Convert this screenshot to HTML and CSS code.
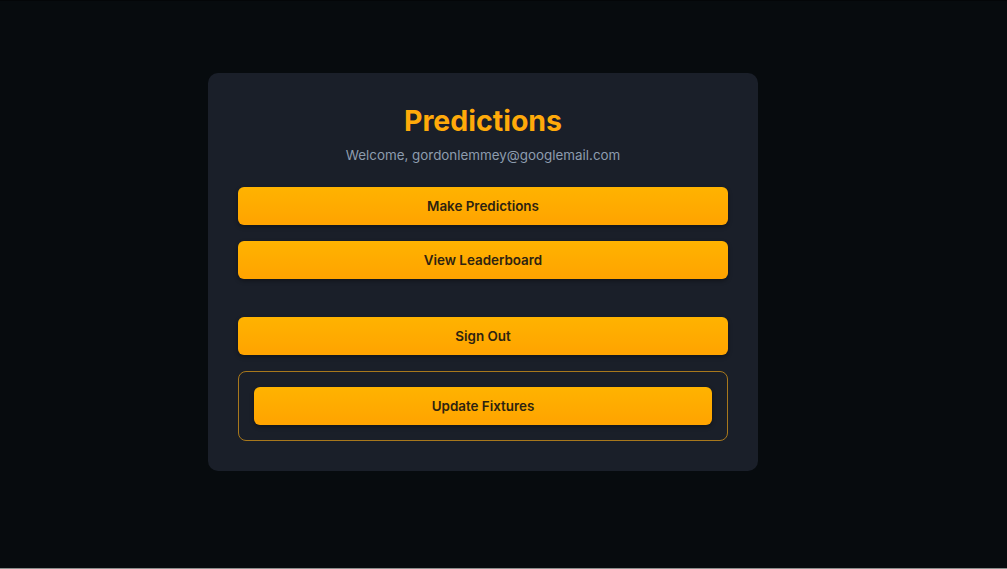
FILE: index.html
```html
<!DOCTYPE html>
<html lang="en">
<head>
<meta charset="utf-8">
<title>Predictions</title>
<link rel="stylesheet" href="styles.css">
</head>
<body>
<main class="page">
  <section class="card">
    <h1 class="title">Predictions</h1>
    <p class="welcome">Welcome, gordonlemmey@googlemail.com</p>
    <div class="actions">
      <button class="btn">Make Predictions</button>
      <button class="btn">View Leaderboard</button>
    </div>
    <button class="btn signout">Sign Out</button>
    <div class="admin">
      <button class="btn">Update Fixtures</button>
    </div>
  </section>
</main>
</body>
</html>
```

FILE: styles.css
```css
html {
  background: #8a8f8c;
}
body {
  margin: 0;
  min-height: 568px;
  background: #070b0e;
  font-family: Inter, "Noto Sans", sans-serif;
  border-top: 1px solid #040608;
  box-sizing: border-box;
}
.page {
  padding-top: 72px;
  padding-left: 208px;
}
.card {
  width: 550px;
  box-sizing: border-box;
  background: #1a1f29;
  border-radius: 10px;
  padding: 30px 30px 30px;
  display: flex;
  flex-direction: column;
}
.title {
  margin: 0;
  text-align: center;
  color: #ffaa0a;
  font-size: 28.5px;
  line-height: 36px;
  font-weight: 700;
}
.welcome {
  margin: 6px 0 0;
  text-align: center;
  color: #8d9cae;
  font-size: 13.4px;
  line-height: 20px;
}
.actions {
  margin-top: 22px;
  display: flex;
  flex-direction: column;
  gap: 16px;
}
.btn {
  display: block;
  width: 100%;
  height: 38px;
  border: none;
  border-radius: 6px;
  background: linear-gradient(180deg, #ffb300 0%, #ffa300 100%);
  color: #2e2310;
  font-family: Inter, "Noto Sans", sans-serif;
  font-size: 13.4px;
  font-weight: 600;
  box-shadow: 0 2px 4px rgba(0, 0, 0, 0.35);
  cursor: pointer;
}
.signout {
  margin-top: 38px;
}
.admin {
  margin-top: 16px;
  border: 1px solid #a8781c;
  border-radius: 8px;
  padding: 15px 15px;
}
```
